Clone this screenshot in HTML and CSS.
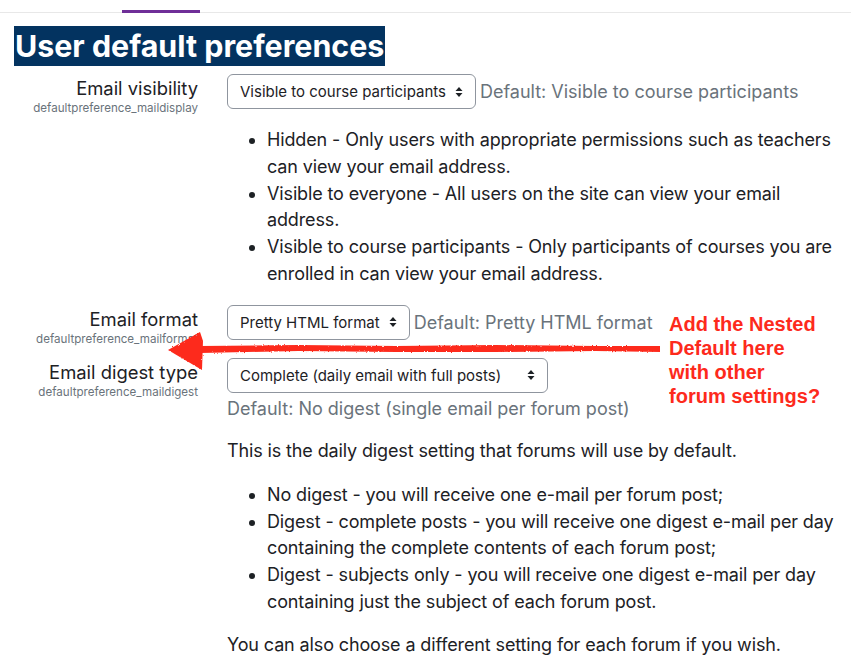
FILE: index.html
```html
<!DOCTYPE html>
<html lang="en">
<head>
    <meta charset="UTF-8">
    <meta name="viewport" content="width=device-width, initial-scale=1.0">
    <title>User default preferences</title>
    <link rel="stylesheet" href="styles.css">
</head>
<body>
    <div class="topnav">
        <span class="tab-active"></span>
    </div>

    <div class="page">
        <h2 class="heading"><span>User default preferences</span></h2>

        <div class="setting">
            <div class="setting-label">
                <div class="name">Email visibility</div>
                <div class="key">defaultpreference_maildisplay</div>
            </div>
            <div class="setting-body">
                <div class="field">
                    <div class="select">Visible to course participants
                        <svg class="caret" width="8" height="12" viewBox="0 0 8 12"><path d="M4 1 L7.5 5 L0.5 5 Z M4 11 L7.5 7 L0.5 7 Z" fill="#1d2125"/></svg>
                    </div>
                    <span class="default">Default: Visible to course participants</span>
                </div>
                <ul class="desc-list">
                    <li>Hidden - Only users with appropriate permissions such as teachers can view your email address.</li>
                    <li>Visible to everyone - All users on the site can view your email address.</li>
                    <li>Visible to course participants - Only participants of courses you are enrolled in can view your email address.</li>
                </ul>
            </div>
        </div>

        <div class="setting setting-format">
            <div class="setting-label">
                <div class="name">Email format</div>
                <div class="key">defaultpreference_mailformat</div>
            </div>
            <div class="setting-body">
                <div class="field">
                    <div class="select">Pretty HTML format
                        <svg class="caret" width="8" height="12" viewBox="0 0 8 12"><path d="M4 1 L7.5 5 L0.5 5 Z M4 11 L7.5 7 L0.5 7 Z" fill="#1d2125"/></svg>
                    </div>
                    <span class="default">Default: Pretty HTML format</span>
                </div>
            </div>
        </div>

        <div class="setting setting-digest">
            <div class="setting-label">
                <div class="name">Email digest type</div>
                <div class="key">defaultpreference_maildigest</div>
            </div>
            <div class="setting-body">
                <div class="field">
                    <div class="select select-wide">Complete (daily email with full posts)
                        <svg class="caret" width="8" height="12" viewBox="0 0 8 12"><path d="M4 1 L7.5 5 L0.5 5 Z M4 11 L7.5 7 L0.5 7 Z" fill="#1d2125"/></svg>
                    </div>
                </div>
                <div class="default default-below">Default: No digest (single email per forum post)</div>
                <p class="desc">This is the daily digest setting that forums will use by default.</p>
                <ul class="desc-list">
                    <li>No digest - you will receive one e-mail per forum post;</li>
                    <li>Digest - complete posts - you will receive one digest e-mail per day containing the complete contents of each forum post;</li>
                    <li>Digest - subjects only - you will receive one digest e-mail per day containing just the subject of each forum post.</li>
                </ul>
                <p class="desc">You can also choose a different setting for each forum if you wish.</p>
            </div>
        </div>
    </div>

    <!-- screenshot annotation -->
    <div class="note">Add the Nested<br>Default here<br>with other<br>forum settings?</div>
    <svg class="arrow" width="500" height="56" viewBox="0 0 500 56">
        <defs>
            <filter id="rough" x="-5%" y="-20%" width="110%" height="140%">
                <feTurbulence type="fractalNoise" baseFrequency="0.6" numOctaves="2" seed="3"/>
                <feDisplacementMap in="SourceGraphic" scale="2.5"/>
            </filter>
        </defs>
        <g fill="#fd2a1c" filter="url(#rough)">
            <path d="M34 23 L132 22 L230 23 L330 22 L430 23 L494 23 L494 29 L430 28 L330 29 L230 29 L132 28 L34 30 Z"/>
            <path d="M2 27 L34 9 L37 18 L36 47 Z"/>
        </g>
    </svg>
</body>
</html>
```

FILE: styles.css
```css
body {
    margin: 0;
    font-family: Inter, "Noto Sans", sans-serif;
    color: #1d2125;
    background: #fff;
}
.topnav {
    height: 12px;
    border-bottom: 1px solid #e8e8e8;
    position: relative;
}
.tab-active {
    position: absolute;
    left: 122px;
    bottom: -1px;
    width: 78px;
    height: 3px;
    background: #6f2f98;
}
.page {
    padding: 0 4px 0 14px;
}
.heading {
    margin: 13px 0 8px;
    font-size: 30.4px;
    font-weight: 700;
    line-height: 40px;
}
.heading span {
    display: inline-block;
    background: #033360;
    color: #fff;
    padding: 0 1px;
}
.setting {
    display: grid;
    grid-template-columns: 184px 1fr;
    column-gap: 29px;
}
.setting-label {
    text-align: right;
    padding-top: 2px;
}
.name {
    font-size: 18.4px;
    line-height: 24px;
}
.key {
    font-size: 11.6px;
    line-height: 16px;
    color: #6a737b;
}
.field {
    display: flex;
    align-items: center;
    gap: 4px;
}
.select {
    height: 35px;
    box-sizing: border-box;
    border: 1px solid #8f959e;
    border-radius: 6px;
    font-size: 15px;
    padding: 0 12px;
    display: flex;
    align-items: center;
    gap: 9px;
    white-space: nowrap;
}
.select-wide {
    width: 321px;
    justify-content: space-between;
}
.default {
    font-size: 18px;
    color: #6a737b;
}
.default-below {
    line-height: 27px;
    margin-top: 2px;
}
.desc-list {
    margin: 18px 0 0;
    padding-left: 40px;
    font-size: 18px;
    line-height: 26.8px;
    letter-spacing: -0.13px;
}
.desc {
    font-size: 18px;
    line-height: 27px;
    letter-spacing: -0.13px;
    margin: 15px 0 0;
}
.setting-format {
    margin-top: 17px;
}
.setting-digest {
    margin-top: 11px;
}
.note {
    position: absolute;
    left: 669px;
    top: 312px;
    font-family: "Liberation Sans", Arial, sans-serif;
    font-weight: 700;
    font-size: 20px;
    line-height: 24px;
    color: #fd2a1c;
}
.arrow {
    position: absolute;
    left: 166px;
    top: 323px;
}
```
